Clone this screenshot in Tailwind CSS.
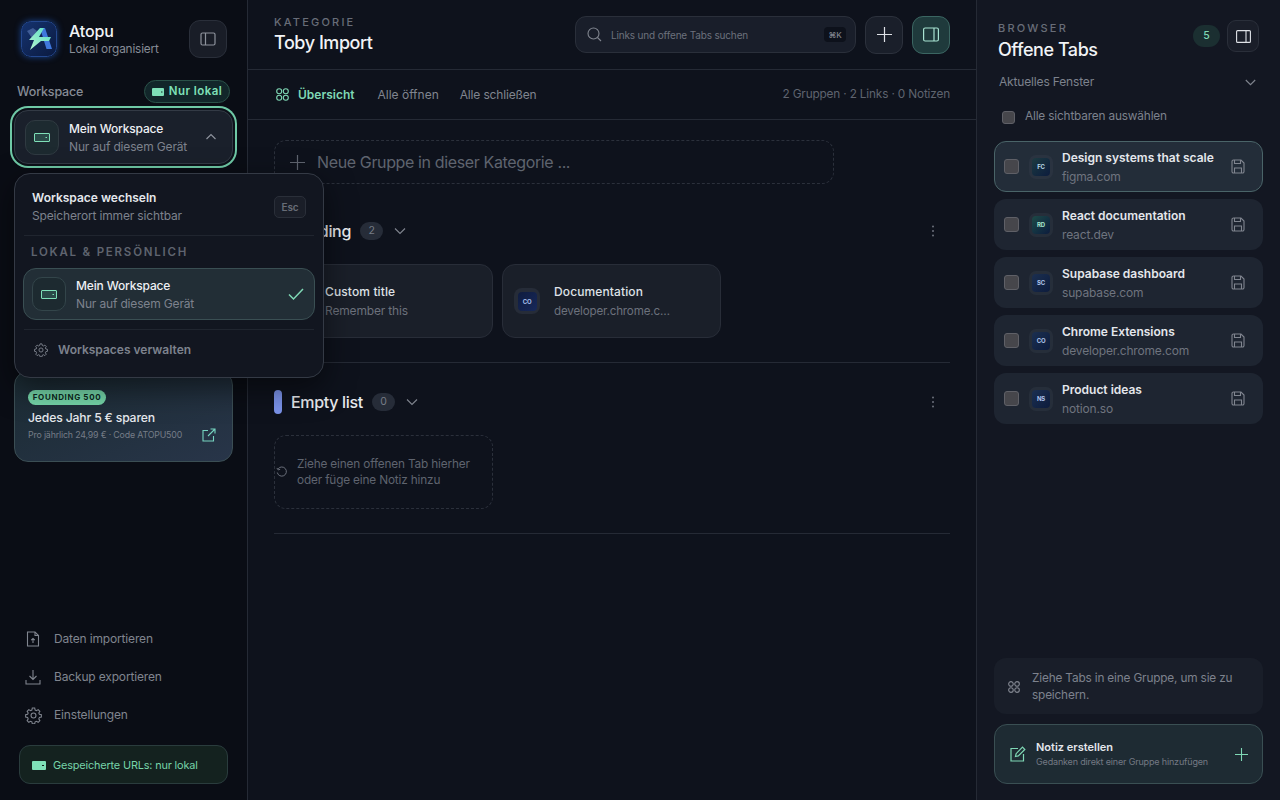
<!DOCTYPE html>
<html lang="de">
<head>
    <meta charset="UTF-8">
    <title>Atopu</title>
    <script src="https://cdn.jsdelivr.net/npm/@tailwindcss/browser@4"></script>
</head>
<body class="bg-[#0e121c] font-['Inter',sans-serif] tracking-[-0.01em] text-white overflow-hidden">
<div class="flex h-[800px] w-[1280px]">

    <!-- Left sidebar -->
    <aside class="relative z-10 flex w-[248px] shrink-0 flex-col border-r border-[#252a35] bg-[#0a0d15]">
        <div class="flex h-[38px] items-center justify-between mt-[20px] pl-[21px] pr-[20px]">
            <div class="flex items-center gap-[12px]">
                <svg class="h-[36px] w-[36px] shrink-0 rounded-[9px] shadow-[0_0_6px_#1b4590]" viewBox="0 0 36 36">
                    <defs>
                        <linearGradient id="logoBg" x1="0" y1="0" x2="1" y2="1"><stop offset="0" stop-color="#15336f"/><stop offset="1" stop-color="#0b1a40"/></linearGradient>
                        <linearGradient id="bolt" x1="0" y1="1" x2="1" y2="0"><stop offset="0" stop-color="#b5f5d0"/><stop offset="1" stop-color="#58dcc4"/></linearGradient>
                    </defs>
                    <rect x="0.5" y="0.5" width="35" height="35" rx="9" fill="url(#logoBg)" stroke="#24488f"/>
                    <path d="M6 10l6-3 4 3-5 7z" fill="#3f5c96"/>
                    <path d="M19 7h5l7 21h-5.500z" fill="#3f78dc"/>
                    <path d="M19 7h4l-5 9h12l-2 4h-8l-11 9 4-10h-5z" fill="url(#bolt)"/>
                </svg>
                <div>
                    <div class="text-[16px] leading-[20px] font-medium text-[#f1f3f6]">Atopu</div>
                    <div class="text-[11.800px] leading-[16px] text-[#878c96]">Lokal organisiert</div>
                </div>
            </div>
            <button class="flex h-[38px] w-[38px] items-center justify-center rounded-[11px] border border-[#2a2f3a] bg-[#191d27]">
                <svg class="h-[16px] w-[16px]" viewBox="0 0 16 16" fill="none" stroke="#8d929c" stroke-width="1.200"><rect x="1" y="2" width="14" height="12" rx="1.500"/><path d="M5.500 2v12"/></svg>
            </button>
        </div>

        <div class="mt-[22px] flex h-[23px] items-center justify-between pl-[17px] pr-[17px]">
            <span class="pt-[1px] text-[12.500px] font-medium text-[#868b95]">Workspace</span>
            <span class="flex h-[23px] w-[86px] items-center justify-center gap-[5px] rounded-full border border-[#2a5148] bg-[#12262a] text-[11.500px] font-semibold tracking-[0.04em] text-[#7fe0b8]">
                <svg class="h-[8px] w-[12px]" viewBox="0 0 12 8"><rect width="12" height="8" rx="1" fill="#7fe0b8"/><rect x="9" y="3.500" width="1.500" height="1" fill="#12262a"/></svg>
                Nur lokal
            </span>
        </div>

        <button class="mx-[14px] mt-[7px] flex h-[54px] w-[219px] items-center rounded-[14px] border border-[#333a45] bg-[#1a202b] pl-[10px] pr-[15px] text-left shadow-[0_0_0_2px_#0c1119,0_0_0_4px_#6fc9a6]">
            <span class="flex h-[35px] w-[34px] shrink-0 items-center justify-center rounded-[10px] border border-[#2f3a41] bg-[#1d2a30]">
                <svg class="h-[9px] w-[16px]" viewBox="0 0 16 9" fill="none" stroke="#7fe0b8"><rect x="0.500" y="0.500" width="15" height="8" rx="0.500" fill="#2a4a48"/><path d="M11.500 4.500h1.500"/></svg>
            </span>
            <span class="ml-[10px] flex-1 pt-[1px]">
                <span class="block text-[12px] leading-[18px] font-medium text-[#eef0f4]">Mein Workspace</span>
                <span class="block text-[12px] leading-[18px] text-[#7d828d]">Nur auf diesem Gerät</span>
            </span>
            <svg class="h-[10px] w-[12px]" viewBox="0 0 12 10" fill="none" stroke="#8d929c" stroke-width="1.200"><path d="M1.500 7L6 2.500 10.500 7"/></svg>
        </button>

        <!-- Workspace menu, lies over the page -->
        <div class="absolute left-[14px] top-[173px] z-20 h-[205px] w-[310px] rounded-[16px] border border-[#343a45] bg-[#121620] shadow-[0_10px_30px_rgba(0,0,0,0.5)]">
            <div class="flex h-[61px] items-center justify-between pl-[17px] pr-[17px] pt-[5px]">
                <div>
                    <div class="text-[12px] leading-[18px] font-semibold tracking-normal text-[#e4e7ec]">Workspace wechseln</div>
                    <div class="text-[12px] leading-[18px] text-[#7d828d]">Speicherort immer sichtbar</div>
                </div>
                <span class="flex h-[22px] w-[32px] items-center justify-center rounded-[5px] border border-[#2a2f39] bg-[#1a1e28] text-[10px] font-semibold text-[#676c77]">Esc</span>
            </div>
            <div class="mx-[9px] border-t border-[#20252f]"></div>
            <div class="pl-[16px] pt-[9px] text-[11.500px] leading-[14px] font-semibold tracking-[0.155em] text-[#5f646f]">LOKAL &amp; PERSÖNLICH</div>
            <div class="mx-[8px] mt-[9px] flex h-[52px] items-center rounded-[13px] border border-[#3a4f53] bg-[#222e36] pl-[8px] pr-[10px]">
                <span class="flex h-[34px] w-[34px] shrink-0 items-center justify-center rounded-[10px] border border-[#33454a] bg-[#1d2a30]">
                    <svg class="h-[9px] w-[16px]" viewBox="0 0 16 9" fill="none" stroke="#7fe0b8"><rect x="0.500" y="0.500" width="15" height="8" rx="0.500" fill="#2a4a48"/><path d="M11.500 4.500h1.500"/></svg>
                </span>
                <span class="ml-[10px] flex-1 pt-[1px]">
                    <span class="block text-[12px] leading-[18px] font-medium text-[#eef0f4]">Mein Workspace</span>
                    <span class="block text-[12px] leading-[18px] text-[#7d828d]">Nur auf diesem Gerät</span>
                </span>
                <svg class="h-[14px] w-[16px]" viewBox="0 0 16 14" fill="none" stroke="#7fd8b5" stroke-width="1.500"><path d="M1 7.500l4.500 4.500L15 2"/></svg>
            </div>
            <div class="mx-[9px] mt-[9px] border-t border-[#20252f]"></div>
            <div class="flex items-center gap-[10px] pl-[19px] pt-[11px]">
                <svg class="h-[14px] w-[14px]" viewBox="0 0 24 24" fill="none" stroke="#7d828d" stroke-width="1.600"><path d="M10.300 2.500h3.400l.6 2.800 1.900.8 2.400-1.500 2.400 2.400-1.500 2.400.8 1.900 2.800.6v3.400l-2.800.6-.8 1.900 1.500 2.400-2.400 2.400-2.400-1.500-1.900.8-.6 2.800h-3.400l-.6-2.800-1.900-.8-2.400 1.500-2.400-2.400 1.500-2.400-.8-1.900-2.800-.6v-3.400l2.800-.6.8-1.900-1.500-2.400 2.400-2.400 2.400 1.500 1.900-.8z" transform="translate(0 -1)"/><circle cx="12" cy="12" r="3.500"/></svg>
                <span class="text-[12px] leading-[18px] font-semibold tracking-normal text-[#7d828d]">Workspaces verwalten</span>
            </div>
        </div>

        <!-- Founding offer -->
        <div class="mx-[14px] mt-[207px] h-[91px] w-[219px] rounded-[14px] border border-[#3b4e54] bg-gradient-to-br from-[#1b2b33] to-[#283549] pl-[13px] pr-[16px] pt-[18px]">
            <span class="block h-[15px] w-[78px] rounded-full bg-[#75d6a9] text-center text-[8px] leading-[15px] font-bold tracking-[0.08em] text-[#0d2a22]">FOUNDING 500</span>
            <div class="mt-[4px] text-[12.200px] leading-[18px] font-medium text-[#e6e9ee]">Jedes Jahr 5 € sparen</div>
            <div class="mt-[1px] flex items-center justify-between">
                <span class="text-[8.800px] text-[#767d88]">Pro jährlich 24,99 € · Code ATOPU500</span>
                <svg class="h-[14px] w-[14px] shrink-0" viewBox="0 0 14 14" fill="none" stroke="#76d4c0" stroke-width="1.100"><path d="M6 2.500H1v10.500h10.500V8M8.500 1H13v4.500M13 1L6 8"/></svg>
            </div>
        </div>

        <div class="mt-auto px-[19px] pb-[16px]">
            <nav class="flex flex-col pl-[6px]">
                <a class="flex h-[38px] items-center gap-[13px] text-[12px] text-[#80858f]">
                    <svg class="h-[16px] w-[16px]" viewBox="0 0 16 16" fill="none" stroke="#80858f" stroke-width="1.100"><path d="M2.500 1h7.500l3.500 3.500V15h-11z"/><path d="M10 1v3.500h3.500M8 12V7.500M6.200 9.200L8 7.500l1.800 1.700"/></svg>
                    Daten importieren
                </a>
                <a class="flex h-[38px] items-center gap-[13px] text-[12px] text-[#80858f]">
                    <svg class="h-[16px] w-[16px]" viewBox="0 0 16 16" fill="none" stroke="#80858f" stroke-width="1.100"><path d="M8 1v9.500M4.500 7L8 10.500 11.500 7M1 11v4h14v-4"/></svg>
                    Backup exportieren
                </a>
                <a class="flex h-[38px] items-center gap-[12px] text-[12px] text-[#80858f]">
                    <svg class="h-[17px] w-[17px]" viewBox="0 0 24 24" fill="none" stroke="#80858f" stroke-width="1.500"><path d="M10.300 2.500h3.400l.6 2.800 1.900.8 2.400-1.500 2.400 2.400-1.500 2.400.8 1.900 2.800.6v3.400l-2.800.6-.8 1.900 1.500 2.400-2.400 2.400-2.400-1.500-1.900.8-.6 2.800h-3.400l-.6-2.800-1.900-.8-2.400 1.500-2.400-2.400 1.500-2.400-.8-1.900-2.800-.6v-3.400l2.800-.6.8-1.900-1.500-2.400 2.400-2.400 2.400 1.500 1.900-.8z" transform="translate(0 -1)"/><circle cx="12" cy="12" r="3.500"/></svg>
                    Einstellungen
                </a>
            </nav>
            <div class="mt-[11px] flex h-[39px] w-[209px] items-center gap-[7px] rounded-[11px] border border-[#2a3c3d] bg-[#14221f] pl-[12px] pt-[1px] text-[10.900px] text-[#76d4a9]">
                <svg class="h-[9px] w-[14px]" viewBox="0 0 14 9"><rect width="14" height="9" rx="1" fill="#7fe0b8"/><rect x="10" y="4" width="2" height="1" fill="#14221f"/></svg>
                Gespeicherte URLs: nur lokal
            </div>
        </div>
    </aside>

    <!-- Main column -->
    <main class="flex-1 bg-[#0e121c]">
        <header class="flex h-[70px] items-center justify-between border-b border-[#252a35] pl-[26px] pr-[26px]">
            <div>
                <div class="text-[11px] leading-[14px] font-medium tracking-[0.2em] text-[#686d78]">KATEGORIE</div>
                <h1 class="mt-[2px] text-[18px] leading-[24px] font-medium tracking-[-0.025em] text-[#f1f3f6]">Toby Import</h1>
            </div>
            <div class="flex items-center gap-[9px]">
                <div class="flex h-[37px] w-[281px] items-center rounded-[11px] border border-[#2a2f3a] bg-[#191e2a] pl-[11px] pr-[9px]">
                    <svg class="h-[15px] w-[15px]" viewBox="0 0 15 15" fill="none" stroke="#80858f" stroke-width="1.100"><circle cx="6.500" cy="6.500" r="5.500"/><path d="M10.500 10.500L14 14"/></svg>
                    <span class="ml-[9px] flex-1 pt-[1px] text-[10px] text-[#6c717c]">Links und offene Tabs suchen</span>
                    <span class="flex h-[15px] w-[22px] items-center justify-center rounded-[4px] bg-[#0d111b] text-[8px] font-medium text-[#80858f]">⌘K</span>
                </div>
                <button class="flex h-[38px] w-[38px] items-center justify-center rounded-[11px] border border-[#2c313c] bg-[#1a1f2a]">
                    <svg class="h-[15px] w-[15px]" viewBox="0 0 15 15" stroke="#dfe2e7" stroke-width="1.200"><path d="M7.500 0v15M0 7.500h15"/></svg>
                </button>
                <button class="flex h-[38px] w-[38px] items-center justify-center rounded-[11px] border border-[#3b6662] bg-[#1f3a3c]">
                    <svg class="h-[15px] w-[16px]" viewBox="0 0 16 15" fill="none" stroke="#a8e3d2" stroke-width="1.200"><rect x="0.600" y="1" width="14.800" height="13" rx="1.500"/><path d="M11 1v13"/></svg>
                </button>
            </div>
        </header>

        <div class="flex h-[50px] items-center border-b border-[#252a35] pl-[28px] pr-[26px] text-[12px]">
            <svg class="h-[13px] w-[13px]" viewBox="0 0 13 13" fill="none" stroke="#7fd8b5" stroke-width="1.100"><circle cx="3.200" cy="3.200" r="2.500"/><circle cx="9.800" cy="3.200" r="2.500"/><circle cx="3.200" cy="9.800" r="2.500"/><circle cx="9.800" cy="9.800" r="2.500"/></svg>
            <span class="ml-[9px] font-semibold tracking-normal text-[#7fd8b5]">Übersicht</span>
            <span class="ml-[23px] tracking-normal text-[#80858f]">Alle öffnen</span>
            <span class="ml-[21px] text-[#80858f]">Alle schließen</span>
            <span class="ml-auto text-[11.800px] text-[#5f646f]">2 Gruppen · 2 Links · 0 Notizen</span>
        </div>

        <section class="px-[26px] pt-[20px]">
            <div class="flex h-[44px] w-[560px] items-center rounded-[12px] border border-dashed border-[#2b303b] pl-[15px]">
                <svg class="h-[15px] w-[15px]" viewBox="0 0 15 15" stroke="#5f646f" stroke-width="1.200"><path d="M7.500 0v15M0 7.500h15"/></svg>
                <span class="ml-[12px] text-[16px] tracking-[-0.023em] text-[#5f646f]">Neue Gruppe in dieser Kategorie ...</span>
            </div>

            <div class="mt-[35px] flex h-[24px] items-center">
                <span class="h-[24px] w-[8px] rounded-full bg-[#5fcfa5]"></span>
                <h2 class="ml-[9px] text-[16px] font-medium tracking-[-0.02em] text-[#e8eaee]">Reading</h2>
                <span class="ml-[9px] flex h-[18px] w-[23px] items-center justify-center rounded-full bg-[#262c38] text-[10.500px] text-[#777c87]">2</span>
                <svg class="ml-[11px] h-[8px] w-[12px]" viewBox="0 0 12 8" fill="none" stroke="#80858f" stroke-width="1.100"><path d="M1 1.500l5 5 5-5"/></svg>
                <svg class="ml-auto mr-[15px] h-[12px] w-[4px]" viewBox="0 0 4 12" fill="#6c717c"><circle cx="2" cy="1.500" r="1"/><circle cx="2" cy="6" r="1"/><circle cx="2" cy="10.500" r="1"/></svg>
            </div>
            <div class="mt-[21px] flex gap-[9px]">
                <div class="flex h-[74px] w-[219px] items-center rounded-[13px] border border-[#282d38] bg-[#1a1f29] pl-[12px]">
                    <span class="h-[24px] w-[24px] rounded-[7px] bg-[#262c38]"></span>
                    <div class="ml-[14px]">
                        <div class="text-[12px] leading-[20px] font-medium tracking-[0.01em] text-[#dfe2e7]">Custom title</div>
                        <div class="text-[12px] leading-[18px] text-[#6c717c]">Remember this</div>
                    </div>
                </div>
                <div class="flex h-[74px] w-[219px] items-center rounded-[13px] border border-[#282d38] bg-[#1a1f29] pl-[11px]">
                    <span class="flex h-[26px] w-[26px] items-center justify-center rounded-[8px] bg-[#262c38]"><span class="flex h-[19px] w-[19px] items-center justify-center rounded-[4px] bg-gradient-to-br from-[#0f1c3f] to-[#17285a] text-[6px] font-bold text-[#a9c0ee]">CO</span></span>
                    <div class="ml-[14px]">
                        <div class="text-[12px] leading-[20px] font-medium tracking-[0.01em] text-[#dfe2e7]">Documentation</div>
                        <div class="whitespace-nowrap text-[11.600px] leading-[18px] text-[#6c717c]">developer.chrome.c…</div>
                    </div>
                </div>
            </div>
            <div class="mt-[24px] border-t border-[#252a35]"></div>

            <div class="mt-[27px] flex h-[24px] items-center">
                <span class="h-[24px] w-[8px] rounded-full bg-[#7b93ea]"></span>
                <h2 class="ml-[9px] text-[16px] font-medium tracking-[-0.02em] text-[#e8eaee]">Empty list</h2>
                <span class="ml-[9px] flex h-[18px] w-[23px] items-center justify-center rounded-full bg-[#262c38] text-[10.500px] text-[#777c87]">0</span>
                <svg class="ml-[11px] h-[8px] w-[12px]" viewBox="0 0 12 8" fill="none" stroke="#80858f" stroke-width="1.100"><path d="M1 1.500l5 5 5-5"/></svg>
                <svg class="ml-auto mr-[15px] h-[12px] w-[4px]" viewBox="0 0 4 12" fill="#6c717c"><circle cx="2" cy="1.500" r="1"/><circle cx="2" cy="6" r="1"/><circle cx="2" cy="10.500" r="1"/></svg>
            </div>
            <div class="mt-[21px] flex h-[74px] w-[219px] items-center rounded-[12px] border border-dashed border-[#2b303b] pl-[1px]">
                <svg class="h-[12px] w-[12px] shrink-0" viewBox="0 0 11 11" fill="none" stroke="#6c717c" stroke-width="0.900"><path d="M2 2.500a4.200 4.200 0 1 1-.8 3.500M.8 1.800L2 3.600l1.800-.6"/></svg>
                <span class="ml-[9px] text-[11.800px] leading-[16px] text-[#5f646f]">Ziehe einen offenen Tab hierher oder füge eine Notiz hinzu</span>
            </div>
            <div class="mt-[24px] border-t border-[#252a35]"></div>
        </section>
    </main>

    <!-- Right panel: open tabs -->
    <aside class="flex w-[304px] shrink-0 flex-col border-l border-[#252a35] bg-[#131722] pl-[17px] pr-[17px]">
        <div class="mt-[20px] flex h-[40px] items-start">
            <div class="pl-[4px] pt-[1px] flex-1">
                <div class="text-[11px] leading-[14px] font-medium tracking-[0.2em] text-[#686d78]">BROWSER</div>
                <div class="mt-[2px] text-[18px] leading-[26px] font-medium tracking-[-0.025em] text-[#f1f3f6]">Offene Tabs</div>
            </div>
            <span class="mt-[5px] flex h-[22px] w-[27px] items-center justify-center rounded-full bg-[#1b2f31] text-[10.500px] font-medium text-[#7fd8b5]">5</span>
            <button class="ml-[7px] mr-[4px] flex h-[32px] w-[32px] items-center justify-center rounded-[9px] border border-[#2a2f3a] bg-[#1a1e29]">
                <svg class="h-[13px] w-[15px]" viewBox="0 0 15 13" fill="none" stroke="#dfe2e7" stroke-width="1.100"><rect x="0.600" y="0.600" width="13.800" height="11.800" rx="1"/><path d="M10 .6v11.800"/></svg>
            </button>
        </div>
        <div class="mt-[12px] flex h-[20px] items-center justify-between pl-[5px] pr-[7px] text-[12px] text-[#7d828d]">
            Aktuelles Fenster
            <svg class="h-[7px] w-[11px]" viewBox="0 0 11 7" fill="none" stroke="#80858f" stroke-width="1.100"><path d="M.8 1l4.700 4.700L10.200 1"/></svg>
        </div>
        <label class="mt-[15px] flex h-[20px] items-center pl-[8px] text-[11.800px] text-[#7d828d]">
            <span class="h-[13px] w-[13px] rounded-[3px] border border-[#5f6067] bg-[#46464b]"></span>
            <span class="ml-[10px]">Alle sichtbaren auswählen</span>
        </label>

        <div class="mt-[14px] flex flex-col gap-[7px]">
            <div class="flex h-[51px] items-center rounded-[12px] border border-[#4a6468] bg-[#232d39] pl-[9px] pr-[17px]">
                <span class="h-[15px] w-[15px] shrink-0 rounded-[3px] border border-[#5f6067] bg-[#46464b]"></span>
                <span class="ml-[10px] flex h-[24px] w-[24px] shrink-0 items-center justify-center rounded-[7px] bg-[#2a3340]"><span class="flex h-[18px] w-[18px] items-center justify-center rounded-[4px] bg-gradient-to-br from-[#1d3a40] to-[#0d1c3d] text-[6px] font-bold text-[#b9d8e4]">FC</span></span>
                <div class="ml-[9px] flex-1">
                    <div class="text-[12px] leading-[19px] font-semibold tracking-normal text-[#e4e7ec]">Design systems that scale</div>
                    <div class="text-[12px] leading-[19px] text-[#6f747f]">figma.com</div>
                </div>
                <svg class="h-[15px] w-[14px]" viewBox="0 0 14 15" fill="none" stroke="#80858f" stroke-width="1.100"><path d="M2.500 1h7.500l3 3v8.500a1.500 1.500 0 0 1-1.500 1.500h-9A1.500 1.500 0 0 1 1 12.500v-10A1.500 1.500 0 0 1 2.500 1z"/><path d="M3.500 1v3.500h6V1M3.500 14V9h7v5"/></svg>
            </div>
            <div class="flex h-[51px] items-center rounded-[12px] bg-[#1e2531] pl-[10px] pr-[18px]">
                <span class="h-[15px] w-[15px] shrink-0 rounded-[3px] border border-[#5f6067] bg-[#46464b]"></span>
                <span class="ml-[10px] flex h-[24px] w-[24px] shrink-0 items-center justify-center rounded-[7px] bg-[#262e3a]"><span class="flex h-[18px] w-[18px] items-center justify-center rounded-[4px] bg-gradient-to-br from-[#1d4a46] to-[#0d1c3d] text-[6px] font-bold text-[#a9e8cf]">RD</span></span>
                <div class="ml-[9px] flex-1">
                    <div class="text-[12px] leading-[19px] font-semibold tracking-normal text-[#e4e7ec]">React documentation</div>
                    <div class="text-[12px] leading-[19px] text-[#6f747f]">react.dev</div>
                </div>
                <svg class="h-[15px] w-[14px]" viewBox="0 0 14 15" fill="none" stroke="#80858f" stroke-width="1.100"><path d="M2.500 1h7.500l3 3v8.500a1.500 1.500 0 0 1-1.500 1.500h-9A1.500 1.500 0 0 1 1 12.500v-10A1.500 1.500 0 0 1 2.500 1z"/><path d="M3.500 1v3.500h6V1M3.500 14V9h7v5"/></svg>
            </div>
            <div class="flex h-[51px] items-center rounded-[12px] bg-[#1e2531] pl-[10px] pr-[18px]">
                <span class="h-[15px] w-[15px] shrink-0 rounded-[3px] border border-[#5f6067] bg-[#46464b]"></span>
                <span class="ml-[10px] flex h-[24px] w-[24px] shrink-0 items-center justify-center rounded-[7px] bg-[#262e3a]"><span class="flex h-[18px] w-[18px] items-center justify-center rounded-[4px] bg-gradient-to-br from-[#1b2f50] to-[#0d1c3d] text-[6px] font-bold text-[#b0c6ec]">SC</span></span>
                <div class="ml-[9px] flex-1">
                    <div class="text-[12px] leading-[19px] font-semibold tracking-normal text-[#e4e7ec]">Supabase dashboard</div>
                    <div class="text-[12px] leading-[19px] text-[#6f747f]">supabase.com</div>
                </div>
                <svg class="h-[15px] w-[14px]" viewBox="0 0 14 15" fill="none" stroke="#80858f" stroke-width="1.100"><path d="M2.500 1h7.500l3 3v8.500a1.500 1.500 0 0 1-1.500 1.500h-9A1.500 1.500 0 0 1 1 12.500v-10A1.500 1.500 0 0 1 2.500 1z"/><path d="M3.500 1v3.500h6V1M3.500 14V9h7v5"/></svg>
            </div>
            <div class="flex h-[51px] items-center rounded-[12px] bg-[#1e2531] pl-[10px] pr-[18px]">
                <span class="h-[15px] w-[15px] shrink-0 rounded-[3px] border border-[#5f6067] bg-[#46464b]"></span>
                <span class="ml-[10px] flex h-[24px] w-[24px] shrink-0 items-center justify-center rounded-[7px] bg-[#262e3a]"><span class="flex h-[18px] w-[18px] items-center justify-center rounded-[4px] bg-gradient-to-br from-[#1b2f50] to-[#0d1c3d] text-[6px] font-bold text-[#b0c6ec]">CO</span></span>
                <div class="ml-[9px] flex-1">
                    <div class="text-[12px] leading-[19px] font-semibold tracking-normal text-[#e4e7ec]">Chrome Extensions</div>
                    <div class="text-[12px] leading-[19px] text-[#6f747f]">developer.chrome.com</div>
                </div>
                <svg class="h-[15px] w-[14px]" viewBox="0 0 14 15" fill="none" stroke="#80858f" stroke-width="1.100"><path d="M2.500 1h7.500l3 3v8.500a1.500 1.500 0 0 1-1.500 1.500h-9A1.500 1.500 0 0 1 1 12.500v-10A1.500 1.500 0 0 1 2.500 1z"/><path d="M3.500 1v3.500h6V1M3.500 14V9h7v5"/></svg>
            </div>
            <div class="flex h-[51px] items-center rounded-[12px] bg-[#1e2531] pl-[10px] pr-[18px]">
                <span class="h-[15px] w-[15px] shrink-0 rounded-[3px] border border-[#5f6067] bg-[#46464b]"></span>
                <span class="ml-[10px] flex h-[24px] w-[24px] shrink-0 items-center justify-center rounded-[7px] bg-[#262e3a]"><span class="flex h-[18px] w-[18px] items-center justify-center rounded-[4px] bg-gradient-to-br from-[#1b2f50] to-[#0d1c3d] text-[6px] font-bold text-[#b0c6ec]">NS</span></span>
                <div class="ml-[9px] flex-1">
                    <div class="text-[12px] leading-[19px] font-semibold tracking-normal text-[#e4e7ec]">Product ideas</div>
                    <div class="text-[12px] leading-[19px] text-[#6f747f]">notion.so</div>
                </div>
                <svg class="h-[15px] w-[14px]" viewBox="0 0 14 15" fill="none" stroke="#80858f" stroke-width="1.100"><path d="M2.500 1h7.500l3 3v8.500a1.500 1.500 0 0 1-1.500 1.500h-9A1.500 1.500 0 0 1 1 12.500v-10A1.500 1.500 0 0 1 2.500 1z"/><path d="M3.500 1v3.500h6V1M3.500 14V9h7v5"/></svg>
            </div>
        </div>

        <div class="mt-auto flex h-[56px] items-center rounded-[12px] bg-[#191e29] pl-[14px] pr-[14px] pt-[1px]">
            <svg class="h-[12px] w-[12px] shrink-0" viewBox="0 0 13 13" fill="none" stroke="#80858f" stroke-width="1.200"><circle cx="3.200" cy="3.200" r="2.500"/><circle cx="9.800" cy="3.200" r="2.500"/><circle cx="3.200" cy="9.800" r="2.500"/><circle cx="9.800" cy="9.800" r="2.500"/></svg>
            <span class="ml-[12px] text-[11.800px] leading-[17px] text-[#7d828d]">Ziehe Tabs in eine Gruppe, um sie zu speichern.</span>
        </div>
        <div class="mb-[16px] mt-[10px] flex h-[60px] items-center rounded-[13px] border border-[#3a4f53] bg-[#1e2b33] pl-[15px] pr-[14px]">
            <svg class="h-[16px] w-[16px] shrink-0" viewBox="0 0 16 16" fill="none" stroke="#7fd8b5" stroke-width="1.200"><path d="M8 2.500H1V15h12.500V8"/><path d="M5.500 10.500l.6-2.800L12.500 1.200l2.300 2.300-6.500 6.400z"/></svg>
            <div class="ml-[10px] flex-1">
                <div class="text-[11px] leading-[16px] font-semibold tracking-normal text-[#e4e7ec]">Notiz erstellen</div>
                <div class="text-[9px] leading-[14px] text-[#747984]">Gedanken direkt einer Gruppe hinzufügen</div>
            </div>
            <svg class="h-[13px] w-[13px]" viewBox="0 0 13 13" stroke="#7fd8b5" stroke-width="1.100"><path d="M6.500 0v13M0 6.500h13"/></svg>
        </div>
    </aside>
</div>
</body>
</html>
